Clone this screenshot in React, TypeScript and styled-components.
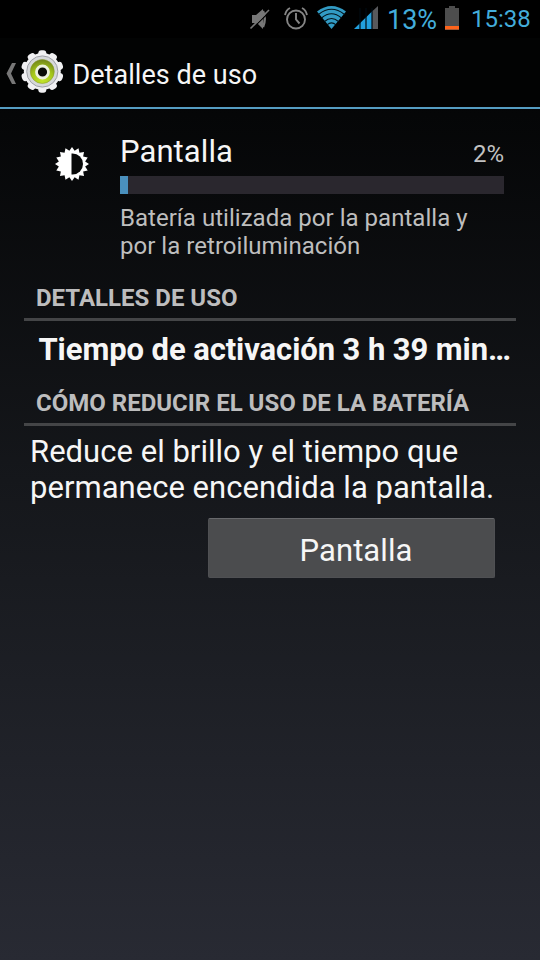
import React from "react";
import styled, { createGlobalStyle } from "styled-components";

const GlobalStyle = createGlobalStyle`
  * { box-sizing: border-box; }
  body { margin: 0; background: #000; }
`;

const Screen = styled.div`
  width: 540px;
  height: 960px;
  overflow: hidden;
  display: flex;
  flex-direction: column;
  background: linear-gradient(#000 0%, #050607 12%, #15171b 50%, #282a33 100%);
  font-family: Roboto, "Liberation Sans", sans-serif;
  color: #f6f6f6;
`;

const Label = styled.span<{ $size: number; $line: number; $spacing?: number; $color?: string }>`
  display: block;
  white-space: nowrap;
  font-size: ${(p) => p.$size}px;
  line-height: ${(p) => p.$line}px;
  letter-spacing: ${(p) => p.$spacing ?? 0}px;
  color: ${(p) => p.$color ?? "#f6f6f6"};
`;

const StatusBar = styled.header`
  height: 38px;
  flex: none;
  display: flex;
  align-items: flex-start;
  padding-left: 248px;
  background: #000;
`;

const StatusText = styled(Label)<{ $left: number; $width: number }>`
  margin-left: ${(p) => p.$left}px;
  width: ${(p) => p.$width}px;
`;

const ActionBar = styled.nav`
  height: 71px;
  flex: none;
  display: flex;
  align-items: flex-start;
  background: #020303;
  border-bottom: 2px solid #559dc2;
`;

const ActionTitle = styled(Label)`
  margin: 21px 0 0 5.500px;
`;

const Summary = styled.section`
  display: grid;
  grid-template-columns: 120px 384px;
  padding-top: 24px;
`;

const IconCell = styled.div`
  padding: 12px 0 0 53px;
`;

const SummaryHead = styled.div`
  display: flex;
  justify-content: space-between;
  align-items: baseline;
  height: 43px;
`;

const Track = styled.div`
  height: 18px;
  background: #2a272e;
`;

const Fill = styled.div`
  width: 8px;
  height: 100%;
  background: #4a90bd;
`;

const Description = styled.div`
  padding-top: 10px;
`;

const SectionHeader = styled.h2<{ $top: number }>`
  margin: ${(p) => p.$top}px 24px 0;
  padding: 0 0 6px 12px;
  height: 37px;
  border-bottom: 3px solid #444547;
  font-weight: 700;
`;

const Detail = styled.div`
  padding: 10px 0 0 38.500px;
  height: 68px;
  font-weight: 700;
`;

const Advice = styled.div`
  padding: 7px 0 0 30px;
`;

const Button = styled.button`
  margin: 12px 0 0 208px;
  width: 287px;
  height: 60px;
  padding: 4px 0 0 9px;
  display: flex;
  align-items: center;
  justify-content: center;
  background: #4b4c4e;
  border: 1px solid #4f5053;
  border-top-color: #68696c;
  border-radius: 2px;
  font-family: inherit;
`;

const StatusIcons = () => (
  <svg width="132" height="38" viewBox="248 0 132 38" fill="none">
    <path d="M252 15h4l7-6v20l-6-6h-5z" fill="#777" />
    <path d="M263 11q3.500 8 0 16" stroke="#777" strokeWidth="2.400" />
    <path d="M252 29L270 11.200" stroke="#000" strokeWidth="1.200" />
    <path d="M250.500 28.500L269 10" stroke="#777" strokeWidth="1.600" />
    <g stroke="#858585" strokeWidth="1.900">
      <circle cx="296" cy="19.500" r="9" />
      <path d="M296 13V19.500l3.500 4" />
      <path d="M285 15q1-5 5-7M307 15q-1-5-5-7" />
    </g>
    <path d="M317 11.500Q331.500 .5 346 11.500L331.500 29z" fill="#329bc4" />
    <g stroke="#02131b" strokeWidth="1.100">
      <path d="M318.500 14.500Q331.500 4 344.500 14.500" />
      <path d="M321.500 18Q331.500 9.500 341.500 18" />
      <path d="M324.500 21.500Q331.500 15.500 338.500 21.500" />
      <path d="M327 24.800Q331.500 21 336 24.800" />
    </g>
    <path d="M354 29L373 10.500V29z" fill="#229fdd" />
    <path d="M372 11.500L378 6V29h-6z" fill="#58595c" />
    <path d="M360 8V29M366 8V29M372 8V29" stroke="#000b12" strokeWidth="1.200" />
  </svg>
);

const BatteryIcon = () => (
  <svg width="17" height="38" viewBox="0 0 17 38">
    <path d="M1 8h4V6h6v2h4v22H1z" fill="#4d4d4d" />
    <path d="M1 26h14v3.500H1z" fill="#ff641b" />
  </svg>
);

const ratio = (index: number, count: number) => (index / count) * Math.PI * 2;

const AppIcon = () => (
  <svg width="67" height="69" viewBox="0 38 67 69">
    <defs>
      <radialGradient id="lime" cx=".5" cy=".85" r=".85">
        <stop offset="0" stopColor="#c4e52c" />
        <stop offset=".55" stopColor="#a3c51a" />
        <stop offset="1" stopColor="#70831a" />
      </radialGradient>
    </defs>
    <path d="M16 63H12L6.500 73.500L12 84H16L11 73.500z" fill="#777" />
    <g fill="#f0f0f2">
      {Array.from({ length: 10 }, (_, i) => (
        <rect key={i} x="38.300" y="50.200" width="8" height="10" rx="3" transform={`rotate(${i * 36} 42.300 71.500)`} />
      ))}
      <circle cx="42.300" cy="71.500" r="18.500" />
    </g>
    <circle cx="42.300" cy="71.500" r="15.600" fill="#d6d8da" stroke="#9698a0" strokeWidth=".9" />
    <circle cx="42.300" cy="71.500" r="12" fill="url(#lime)" stroke="#84962c" strokeWidth=".5" />
    <circle cx="42.500" cy="72" r="6" fill="#0a0c08" stroke="#edf1df" strokeWidth="2.800" />
  </svg>
);

const teeth = Array.from({ length: 32 }, (_, i) => {
  const r = i % 2 === 0 ? 17 : 13.4;
  const a = ratio(i, 32);
  return `${19 + r * Math.sin(a)},${19 - r * Math.cos(a)}`;
}).join(" ");

const BrightnessIcon = () => (
  <svg width="38" height="38" viewBox="0 0 38 38">
    <polygon points={teeth} fill="#fff" />
    <path d="M18.500 8.500H19.500A10.500 10.500 0 0 1 19.500 29.500H18.500z" fill="#080909" />
  </svg>
);

export default function App() {
  return (
    <Screen>
      <GlobalStyle />
      <StatusBar>
        <StatusIcons />
        <StatusText $left={7} $width={57} $size={27} $line={41} $color="#43addb">13%</StatusText>
        <BatteryIcon />
        <StatusText $left={10} $width={64} $size={24} $line={39} $color="#43addb">15:38</StatusText>
      </StatusBar>
      <ActionBar>
        <AppIcon />
        <ActionTitle $size={27} $line={33} $spacing={0.04}>Detalles de uso</ActionTitle>
      </ActionBar>
      <Summary>
        <IconCell><BrightnessIcon /></IconCell>
        <div>
          <SummaryHead>
            <Label $size={31} $line={37} $spacing={0.08}>Pantalla</Label>
            <Label $size={24} $line={37} $color="#c2c2c2">2%</Label>
          </SummaryHead>
          <Track><Fill /></Track>
          <Description>
            <Label $size={24} $line={28} $spacing={0.03} $color="#bebebe">Batería utilizada por la pantalla y</Label>
            <Label $size={24} $line={28} $spacing={0.03} $color="#bebebe">por la retroiluminación</Label>
          </Description>
        </div>
      </Summary>
      <SectionHeader $top={24}>
        <Label $size={24} $line={28} $color="#bdbdbe">DETALLES DE USO</Label>
      </SectionHeader>
      <Detail>
        <Label $size={31} $line={37} $spacing={-0.09}>Tiempo de activación 3 h 39 min…</Label>
      </Detail>
      <SectionHeader $top={0}>
        <Label $size={24} $line={28} $color="#bdbdbe">CÓMO REDUCIR EL USO DE LA BATERÍA</Label>
      </SectionHeader>
      <Advice>
        <Label $size={31} $line={37} $spacing={0.03}>Reduce el brillo y el tiempo que</Label>
        <Label $size={31} $line={36} $spacing={0.03}>permanece encendida la pantalla.</Label>
      </Advice>
      <Button>
        <Label $size={31} $line={37} $spacing={0.08}>Pantalla</Label>
      </Button>
    </Screen>
  );
}
